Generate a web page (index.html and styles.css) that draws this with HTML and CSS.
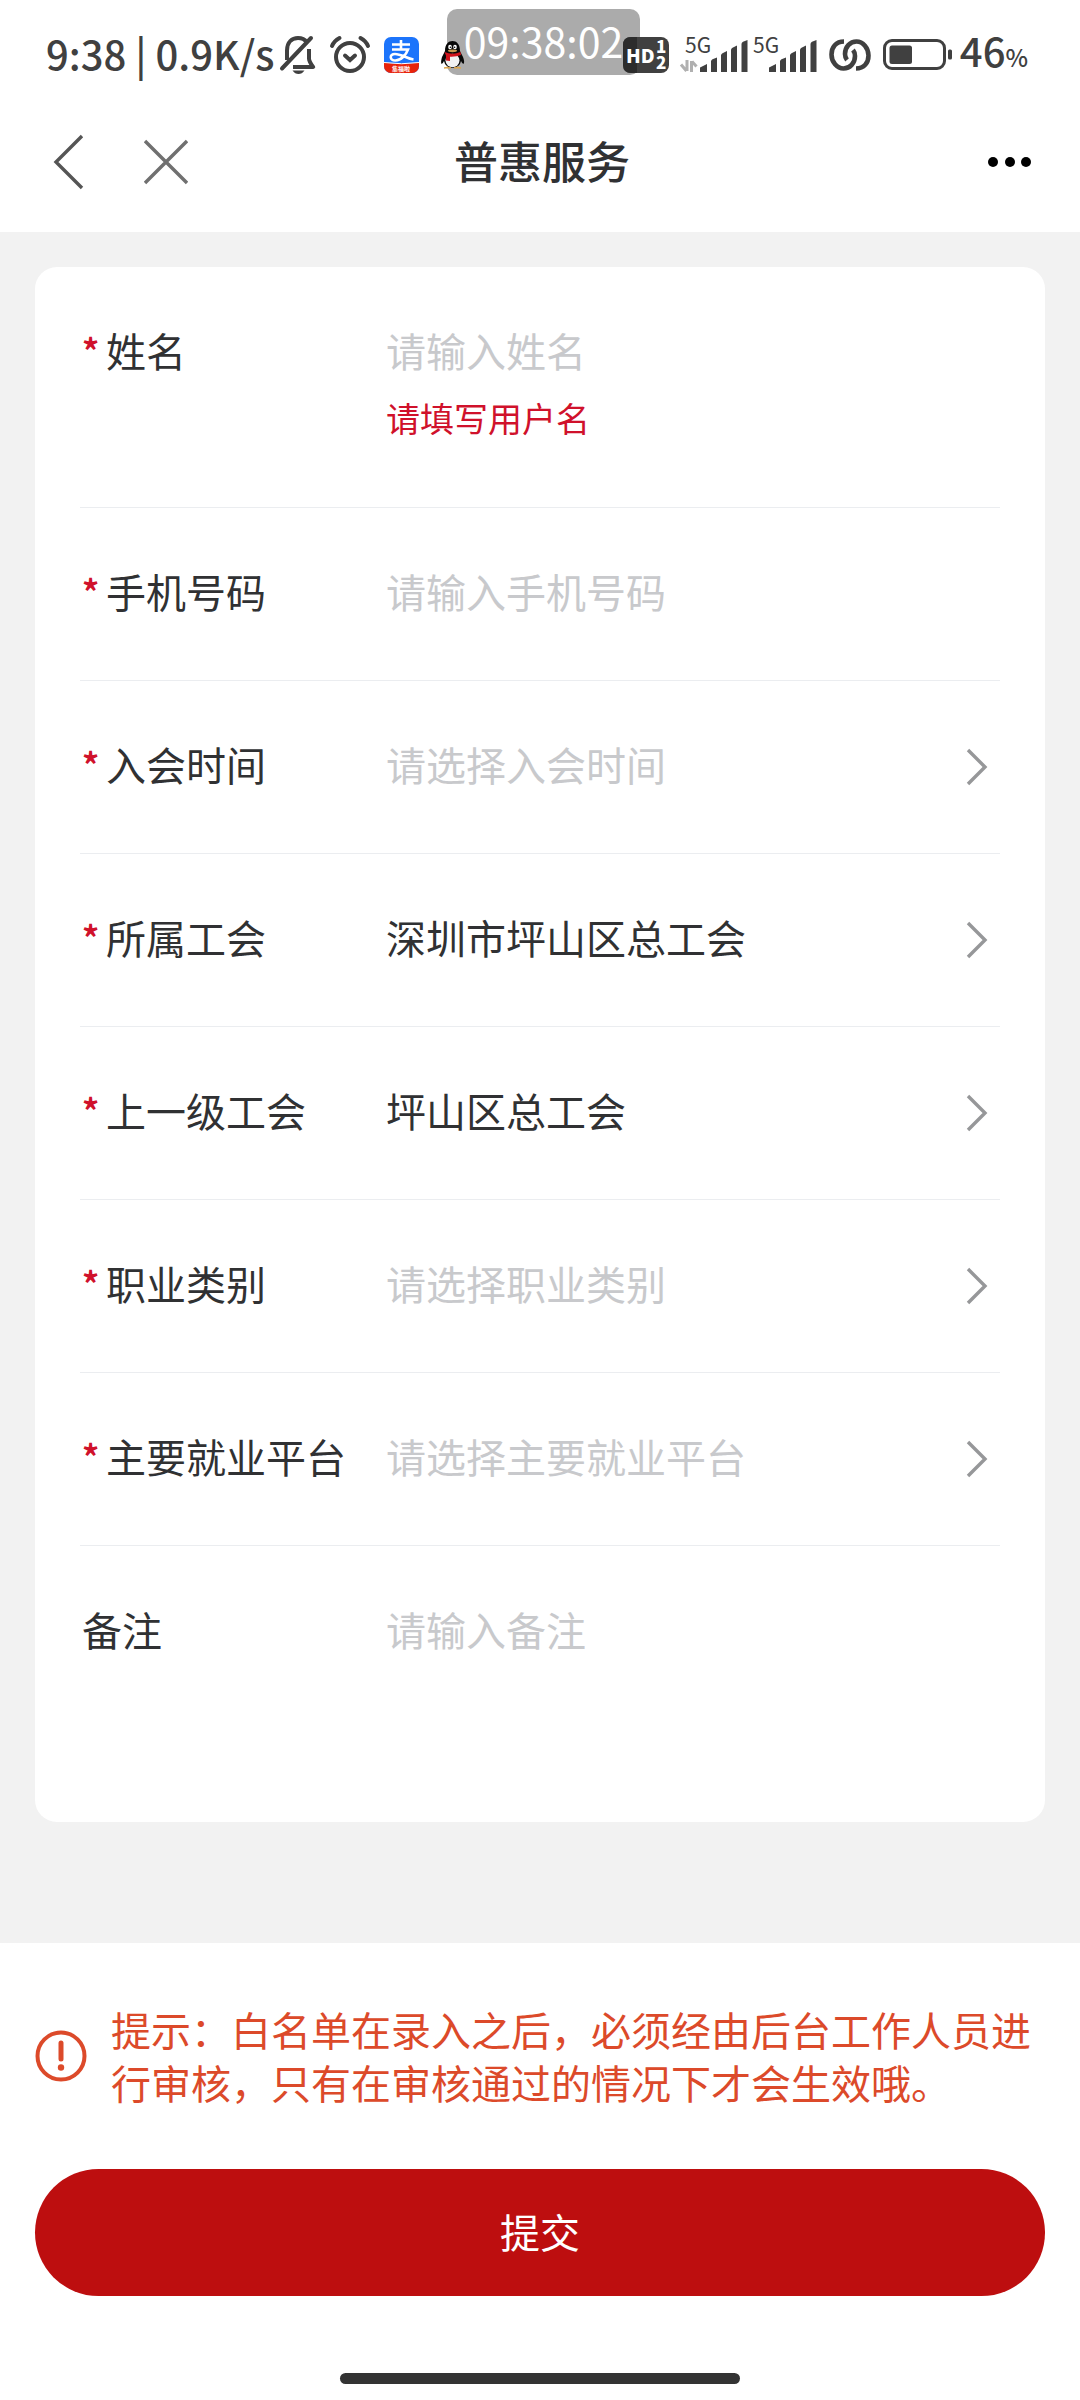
FILE: index.html
```html
<!DOCTYPE html>
<html lang="zh-CN">
<head>
<meta charset="utf-8">
<meta name="viewport" content="width=device-width, initial-scale=1">
<title>普惠服务</title>
<link rel="stylesheet" href="styles.css">
</head>
<body>
<svg class="defs" aria-hidden="true">
  <symbol id="chevron" viewBox="0 0 24 40"><path d="M3 3 20 20 3 37" fill="none" stroke="#969799" stroke-width="3.4"/></symbol>
  <symbol id="bars" viewBox="0 0 48 32">
    <path d="M0 32V27.500L7 24V32ZM11 32V21.500Q11 20 12.500 19.300L17 17.500V32ZM21 32V15.500Q21 14 22.500 13.200L27 11V32ZM31 32V10Q31 8.500 32.500 7.700L37 5.500V32ZM41.500 32V4Q41.500 2.500 43 1.700L47.500 0V32Z" fill="#404040"/>
  </symbol>
</svg>

<div class="status">
  <div class="status-left">
    <span class="status-text">9:38 | 0.9K/s</span>
    <svg width="36" height="40" viewBox="0 0 36 40" fill="none" stroke="#404040" stroke-width="4">
      <path d="M7 25V15.500C7 7 12 3 18 3c4 0 7 1.600 8.800 4.200M29 14v9.500c0 3 1.200 4.500 4.200 8.500H13" stroke-linejoin="round"/>
      <path d="M2 33.500 31 3" stroke-linecap="round"/>
      <path d="M12.500 35.500h12q-2.500 3.500-6 3.500t-6-3.500Z" fill="#404040" stroke="none"/>
    </svg>
    <svg width="40" height="40" viewBox="0 0 40 40" fill="none" stroke="#404040" stroke-width="4" stroke-linecap="round">
      <circle cx="20" cy="22" r="14"/>
      <path d="m15 20.500 5 4.500 5-4.500M2 11q2-5 7.500-8M38 11q-2-5-7.500-8"/>
    </svg>
    <svg width="35" height="36" viewBox="0 0 35 36">
      <defs><clipPath id="app"><rect width="35" height="36" rx="7"/></clipPath></defs>
      <g clip-path="url(#app)">
        <path fill="#1c74fb" d="M0 0h35v36H0z"/>
        <path fill="#e8230b" d="M0 25.500q17.500 2.500 35 0V36H0z"/>
        <path d="M0 25.500q17.500 2.500 35 0" fill="none" stroke="#fff"/>
        <g fill="none" stroke="#fff" stroke-width="2.600">
          <path d="M8 7.500h18M17 3v10M8 12.500h16c-2 5.500-7 11-12.500 11-6 0-6.500-6.500-.5-6.500 6 0 12 4.500 18.500 5.500"/>
        </g>
        <text x="17" y="34" class="app-label" text-anchor="middle">集福啦</text>
      </g>
    </svg>
    <svg class="penguin" width="23" height="28" viewBox="0 0 23 28">
      <path d="M4 10C4 3 7.500 0 11.500 0S19 3 19 10l3 6q2 5 .5 7-1.500-.5-2.500-3-1 6-8.500 7Q4 26 3 20q-1 2.500-2.500 3-1-2 .5-7Z" fill="#080808"/>
      <ellipse cx="11.500" cy="19.500" rx="7" ry="6.800" fill="#f2f2f2"/>
      <ellipse cx="9" cy="6" rx="1.800" ry="2.300" fill="#fff"/><ellipse cx="14" cy="6" rx="1.800" ry="2.300" fill="#fff"/>
      <circle cx="9.400" cy="6.300" r=".8"/><circle cx="13.600" cy="6.300" r=".8"/>
      <ellipse cx="11.500" cy="9.800" rx="4.600" ry="1.400" fill="#c99a50"/>
      <path d="M3.500 11q8 3.500 16 0l.5 3q-5 2-11 1.700V20l-4-.5v-5Z" fill="#d0131c"/>
      <path d="M3 27q3-1.800 7 0ZM13 27q4-1.800 7 0Z" fill="#dca54d" stroke="#dca54d"/>
    </svg>
  </div>
  <div class="status-right">
    <svg class="hd" width="46" height="36" viewBox="0 0 46 36">
      <rect width="46" height="36" rx="8" fill="#404040"/>
      <path d="M0 8q0-8 8-8h6v36H8q-8 0-8-8Z" fill="#2c2c2c"/>
      <text x="3" y="26" class="hd-text">HD</text>
      <text x="33" y="16" class="hd-num">1</text>
      <text x="33" y="32" class="hd-num">2</text>
    </svg>
    <div class="signals">
      <svg width="67" height="36" viewBox="0 0 67 36">
        <text x="4" y="16" class="net">5G</text>
        <path d="M6 23v11M5.500 34 0 27.500M10.500 35V24M11 24.500l4.500 5" stroke="#b0b0b0" stroke-width="3" fill="none"/>
        <use href="#bars" x="19" y="3" width="48" height="32"/>
      </svg>
      <svg width="64" height="36" viewBox="0 0 64 36">
        <text x="0" y="16" class="net">5G</text>
        <use href="#bars" x="16" y="3" width="48" height="32"/>
      </svg>
    </div>
    <svg width="42" height="32" viewBox="0 0 42 32" fill="none" stroke="#404040" stroke-width="4.600">
      <path d="M15 2.500C7 2.500 2.500 8 2.500 15.500S8 29.500 14.500 29.500 26 24 26 17q0-3.500-2-6"/>
      <path d="M27 29.500c8 0 12.500-5.500 12.500-13S34 2.500 27.500 2.500 16 8 16 15q0 3.500 2 6"/>
    </svg>
    <div class="battery">
      <svg width="69" height="32" viewBox="0 0 69 32">
        <rect x="1.500" y="1.500" width="60" height="28" rx="7.500" fill="none" stroke="#404040" stroke-width="3"/>
        <rect x="6.500" y="6.500" width="22.500" height="18.500" rx="2.500" fill="#404040"/>
        <rect x="65" y="10.500" width="4" height="10" rx="1.500" fill="#404040"/>
      </svg>
      <span class="status-text">46<span class="percent">%</span></span>
    </div>
  </div>
  <div class="clock">09:38:02</div>
</div>

<header class="nav">
  <div class="nav-side">
    <button type="button" class="icon-btn" aria-label="返回"><svg width="32" height="56" viewBox="0 0 32 56"><path d="M30 2 4 28l26 26" fill="none" stroke="#555" stroke-width="3.400"/></svg></button>
    <button type="button" class="icon-btn" aria-label="关闭"><svg width="44" height="46" viewBox="0 0 44 46"><path d="m1 2 42 42M43 2 1 44" fill="none" stroke="#707070" stroke-width="3.400"/></svg></button>
  </div>
  <h1 class="nav-title">普惠服务</h1>
  <div class="nav-side nav-end">
    <button type="button" class="icon-btn" aria-label="更多"><svg width="44" height="12" viewBox="0 0 44 12"><circle cx="5" cy="6" r="5"/><circle cx="22" cy="6" r="5"/><circle cx="38" cy="6" r="5"/></svg></button>
  </div>
</header>

<form class="form">
  <main class="content">
    <div class="card">
      <div class="field">
        <label class="label" for="name"><span class="star">*</span>姓名</label>
        <div class="value">
          <input class="control" id="name" type="text" placeholder="请输入姓名" aria-describedby="name-error">
          <p class="error" id="name-error">请填写用户名</p>
        </div>
      </div>
      <div class="field">
        <label class="label" for="phone"><span class="star">*</span>手机号码</label>
        <div class="value"><input class="control" id="phone" type="tel" placeholder="请输入手机号码"></div>
      </div>
      <div class="field">
        <label class="label" for="joined"><span class="star">*</span>入会时间</label>
        <select class="control value" id="joined" required><option value="" selected>请选择入会时间</option></select>
        <svg class="arrow"><use href="#chevron"/></svg>
      </div>
      <div class="field">
        <label class="label" for="union"><span class="star">*</span>所属工会</label>
        <select class="control value" id="union" required><option selected>深圳市坪山区总工会</option></select>
        <svg class="arrow"><use href="#chevron"/></svg>
      </div>
      <div class="field">
        <label class="label" for="parent"><span class="star">*</span>上一级工会</label>
        <select class="control value" id="parent" required><option selected>坪山区总工会</option></select>
        <svg class="arrow"><use href="#chevron"/></svg>
      </div>
      <div class="field">
        <label class="label" for="job"><span class="star">*</span>职业类别</label>
        <select class="control value" id="job" required><option value="" selected>请选择职业类别</option></select>
        <svg class="arrow"><use href="#chevron"/></svg>
      </div>
      <div class="field">
        <label class="label" for="platform"><span class="star">*</span>主要就业平台</label>
        <select class="control value" id="platform" required><option value="" selected>请选择主要就业平台</option></select>
        <svg class="arrow"><use href="#chevron"/></svg>
      </div>
      <div class="field">
        <label class="label" for="note">备注</label>
        <div class="value"><textarea class="control note" id="note" placeholder="请输入备注"></textarea></div>
      </div>
    </div>
  </main>

  <footer class="footer">
    <div class="notice">
      <svg class="notice-icon" viewBox="0 0 52 52"><circle cx="26" cy="26" r="23.500" fill="none" stroke="#dc4a2a" stroke-width="4"/><path d="M26 13v16" stroke="#dc4a2a" stroke-width="5" stroke-linecap="round"/><circle cx="26" cy="37.500" r="3.200" fill="#dc4a2a"/></svg>
      <p class="notice-text">提示：白名单在录入之后，必须经由后台工作人员进行审核，只有在审核通过的情况下才会生效哦。</p>
    </div>
    <button type="button" class="submit">提交</button>
    <div class="home-bar"></div>
  </footer>
</form>
</body>
</html>
```

FILE: styles.css
```css
* {
  box-sizing: border-box;
}

body {
  margin: 0;
  min-height: 100vh;
  display: flex;
  flex-direction: column;
  background: #fff;
  color: #303133;
  font-family: "Noto Sans CJK SC", sans-serif;
  font-size: 40px;
  line-height: 60px;
}

.defs {
  position: absolute;
  width: 0;
  height: 0;
}

/* Status bar */
.status {
  position: relative;
  display: flex;
  justify-content: space-between;
  align-items: center;
  height: 110px;
  padding: 0 52px 0 46px;
  color: #404040;
}

.status svg {
  flex: none;
  overflow: visible;
}

.status-left,
.status-right {
  display: flex;
  align-items: center;
  gap: 14px;
}

.status-left svg:first-of-type {
  margin-left: -8px;
}

.status-right {
  gap: 12px;
}

.status-text {
  padding-bottom: 4px;
  font-size: 40px;
  font-weight: 500;
  white-space: nowrap;
}

.percent {
  font-size: 24px;
}

.battery {
  display: flex;
  align-items: center;
  gap: 8px;
}

.penguin {
  margin-left: 8px;
}

.signals {
  display: flex;
  gap: 5px;
}

.app-label {
  font-size: 6px;
  font-weight: 700;
  fill: #fff;
}

.hd-text {
  font-size: 19px;
  font-weight: 900;
  fill: #fff;
}

.hd-num {
  font-size: 17px;
  font-weight: 900;
  fill: #fff;
}

.net {
  font-size: 21px;
  fill: #404040;
}

.clock {
  position: absolute;
  top: 9px;
  left: 50%;
  width: 193px;
  height: 66px;
  margin-left: -93px;
  border-radius: 10px;
  background: rgba(0, 0, 0, 0.33);
  color: #fff;
  font-size: 41px;
  line-height: 62px;
  text-align: center;
}

.penguin,
.hd {
  position: relative;
  z-index: 1;
}

/* Title bar */
.nav {
  display: flex;
  align-items: center;
  height: 122px;
  padding: 0 48px 18px 52px;
}

.nav-side {
  display: flex;
  flex: 1;
  align-items: center;
  gap: 60px;
}

.nav-end {
  justify-content: flex-end;
}

.nav-title {
  margin: 0;
  padding-bottom: 4px;
  font-size: 44px;
  font-weight: 500;
}

.icon-btn {
  display: flex;
  padding: 0;
  border: 0;
  background: none;
}

/* Form */
.form {
  display: flex;
  flex: 1;
  flex-direction: column;
}

.content {
  padding: 35px 35px 121px;
  background: #f2f2f2;
}

.card {
  padding: 0 45px;
  border-radius: 22px;
  background: #fff;
}

.field {
  display: flex;
  padding: 53px 0 59px;
  border-bottom: 1px solid #ebedf0;
}

.field:last-child {
  border-bottom: 0;
}

.label {
  flex: none;
  width: 306px;
  padding-left: 2px;
  white-space: nowrap;
}

.star {
  display: inline-block;
  width: 24px;
  color: #d0112b;
  font-size: 34px;
  font-weight: 700;
  line-height: 34px;
  vertical-align: 3px;
}

.value {
  flex: 1;
  min-width: 0;
}

.control {
  display: block;
  width: 100%;
  height: 60px;
  margin: 0;
  padding: 0;
  border: 0;
  outline: 0;
  background: none;
  color: #303133;
  font: inherit;
  appearance: none;
  resize: none;
}

.control::placeholder,
select.control:invalid {
  color: #c8c9cc;
  opacity: 1;
}

.note {
  height: 164px;
}

.arrow {
  flex: none;
  width: 24px;
  height: 40px;
  margin: 13px 11px 7px 0;
}

.error {
  margin: 8px 0 0;
  color: #d0112b;
  font-size: 34px;
}

/* Notice and submit */
.footer {
  display: flex;
  flex: 1;
  flex-direction: column;
  padding: 60px 35px 16px;
}

.notice {
  display: flex;
  align-items: center;
  gap: 24px;
}

.notice-icon {
  flex: none;
  width: 52px;
  height: 52px;
}

.notice-text {
  margin: 0;
  color: #dc4a2a;
  line-height: 53px;
}

.submit {
  height: 127px;
  margin: 60px 0 76px;
  padding: 0 0 4px;
  border: 0;
  border-radius: 64px;
  background: #bd0e0f;
  color: #fff;
  font: inherit;
}

.home-bar {
  align-self: center;
  width: 400px;
  height: 11px;
  margin-top: auto;
  border-radius: 6px;
  background: #333;
}
```
